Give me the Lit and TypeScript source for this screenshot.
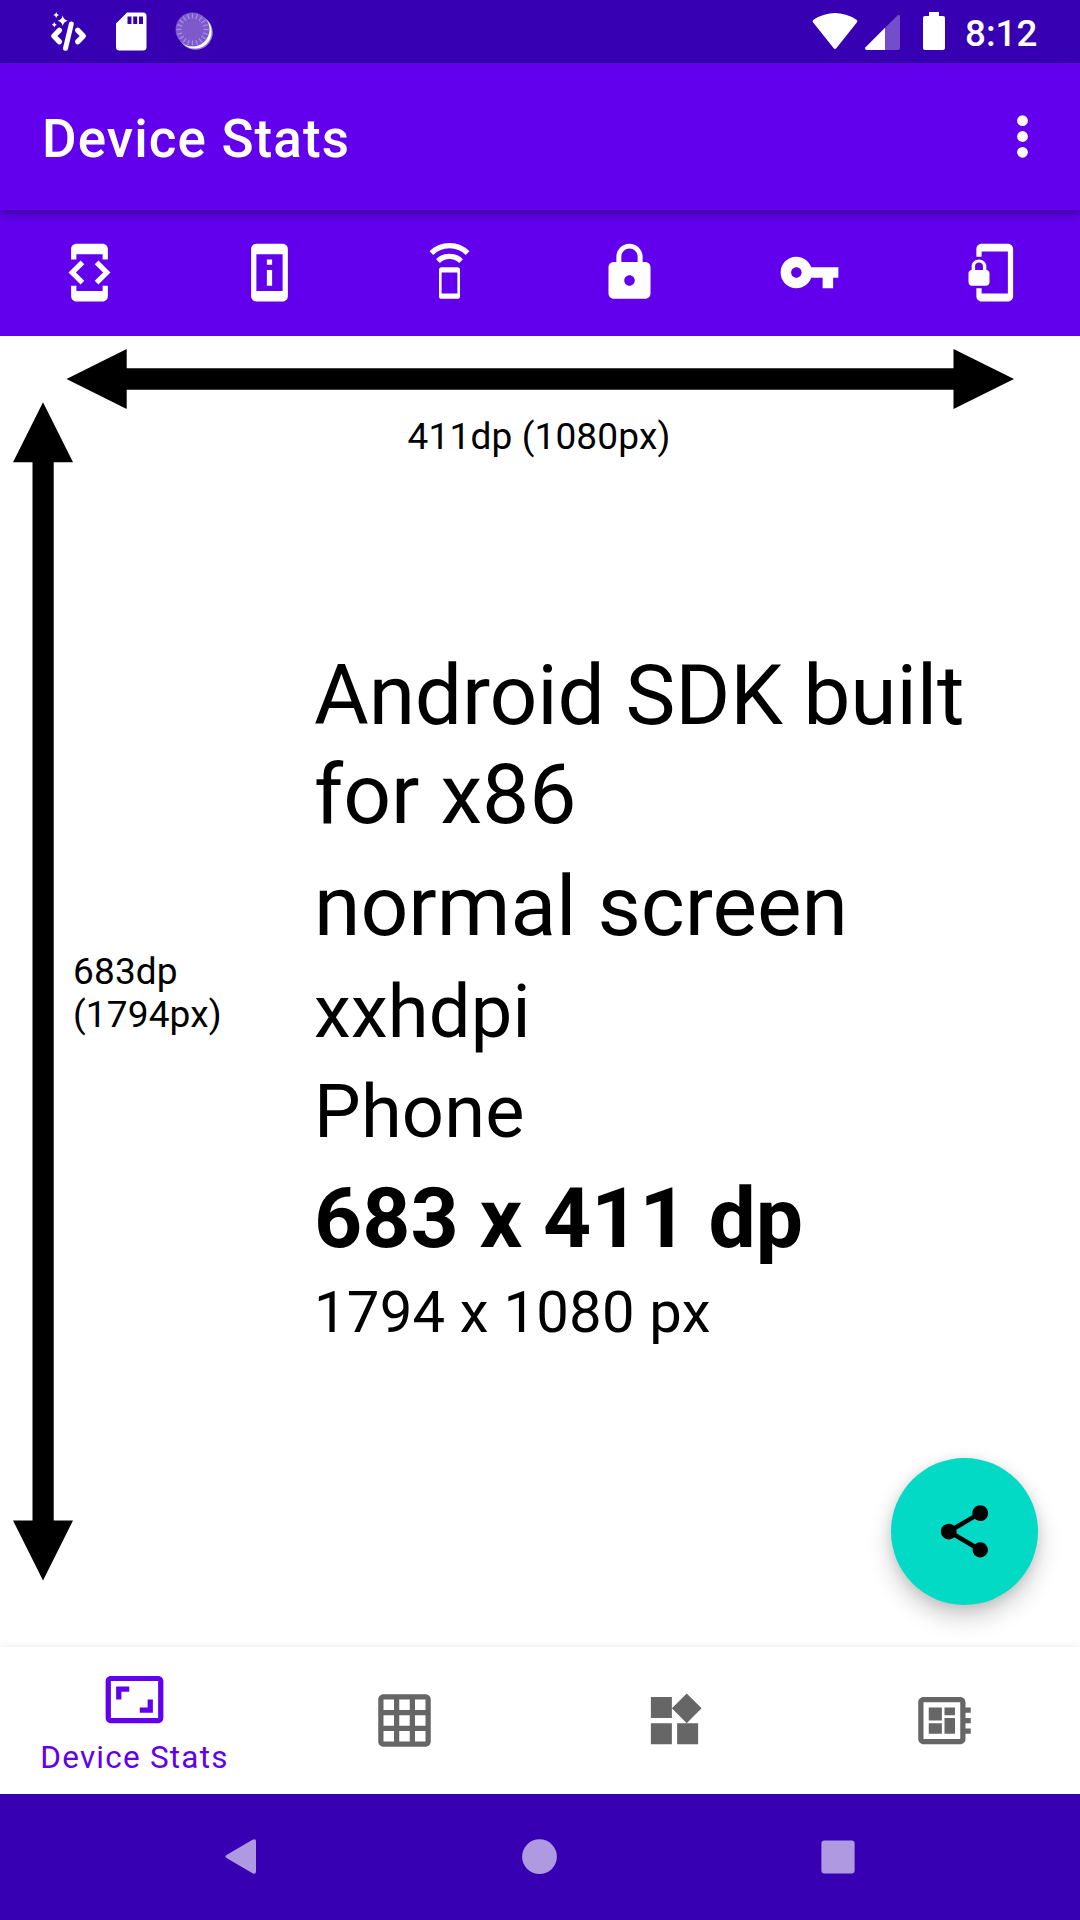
import { LitElement, html, css, svg } from "lit";
import { customElement } from "lit/decorators.js";

const TABS = [
  svg`<path d="M7 5h10v2h2V3c0-1.1-.9-1.99-2-1.99L7 1c-1.1 0-2 .9-2 2v4h2V5zm8.41 11.59L20 12l-4.59-4.59L14 8.83 17.17 12 14 15.17l1.41 1.42zM10 15.17L6.83 12 10 8.83 8.59 7.41 4 12l4.59 4.59L10 15.17zM17 19H7v-2H5v4c0 1.1.9 2 2 2h10c1.1 0 2-.9 2-2v-4h-2v2z"/>`,
  svg`<path d="M13 7h-2v2h2V7zm0 4h-2v6h2v-6zm4-9.99L7 1c-1.1 0-2 .9-2 2v18c0 1.1.9 2 2 2h10c1.1 0 2-.9 2-2V3c0-1.1-.9-1.99-2-1.99zM17 19H7V5h10v14z"/>`,
  svg`<path fill-rule="evenodd" d="M9 10h6q1 0 1 1v10q0 1-1 1H9q-1 0-1-1V11q0-1 1-1zM9 12v8h6v-8z"/><g fill="none" stroke="#fff" stroke-width="2"><path d="M5.1 4.65a9.8 9.8 0 0 1 13.8 0"/><path d="M7.6 7.65a6.2 6.2 0 0 1 8.8 0"/></g>`,
  svg`<path d="M18 8h-1V6c0-2.76-2.24-5-5-5S7 3.24 7 6v2H6c-1.1 0-2 .9-2 2v10c0 1.1.9 2 2 2h12c1.1 0 2-.9 2-2V10c0-1.1-.9-2-2-2zm-6 9c-1.1 0-2-.9-2-2s.9-2 2-2 2 .9 2 2-.9 2-2 2zm3.1-9H8.9V6c0-1.71 1.39-3.1 3.1-3.1 1.71 0 3.1 1.39 3.1 3.1v2z"/>`,
  svg`<path d="M12.65 10C11.83 7.67 9.61 6 7 6c-3.31 0-6 2.69-6 6s2.69 6 6 6c2.61 0 4.83-1.67 5.65-4H17v4h4v-4h2v-4H12.65zM7 14c-1.1 0-2-.9-2-2s.9-2 2-2 2 .9 2 2-.9 2-2 2z"/>`,
  svg`<path d="M19 1H9c-1.1 0-2 .9-2 2v3h2V4h10v16H9v-2H7v3c0 1.1.9 2 2 2h10c1.1 0 2-.9 2-2V3c0-1.1-.9-2-2-2zm-8.2 10V9.5C10.8 8.1 9.4 7 8 7S5.2 8.1 5.2 9.5V11c-.6 0-1.2.6-1.2 1.2v3.5c0 .7.6 1.3 1.2 1.3h5.5c.7 0 1.3-.6 1.3-1.2v-3.5c0-.7-.6-1.3-1.2-1.3zm-1.3 0h-3V9.5c0-.8.7-1.3 1.5-1.3s1.5.5 1.5 1.3V11z"/>`,
];

const PAGES = [
  svg`<path d="M20 2H4c-1.1 0-2 .9-2 2v16c0 1.1.9 2 2 2h16c1.1 0 2-.9 2-2V4c0-1.1-.9-2-2-2zM8 20H4v-4h4v4zm0-6H4v-4h4v4zm0-6H4V4h4v4zm6 12h-4v-4h4v4zm0-6h-4v-4h4v4zm0-6h-4V4h4v4zm6 12h-4v-4h4v4zm0-6h-4v-4h4v4zm0-6h-4V4h4v4z"/>`,
  svg`<path d="M13 13v8h8v-8h-8zM3 21h8v-8H3v8zM3 3v8h8V3H3zm13.66-1.31L11 7.34 16.66 13l5.66-5.66-5.66-5.65z"/>`,
  svg`<path d="M22 9V7h-2V5c0-1.1-.9-2-2-2H4c-1.1 0-2 .9-2 2v14c0 1.1.9 2 2 2h14c1.1 0 2-.9 2-2v-2h2v-2h-2v-2h2v-2h-2V9h2zm-4 10H4V5h14v14zM6 13h5v4H6zm6-6h4v3h-4zM6 7h5v5H6zm6 4h4v6h-4z"/>`,
];

const TICKS = Array.from({ length: 20 }, (_, i) => i * 18);

const icon = (shape: unknown) =>
  html`<svg class="icon" viewBox="0 0 24 24" fill="currentColor">${shape}</svg>`;

@customElement("app-root")
export class AppRoot extends LitElement {
  static styles = css`
    :host {
      display: flex;
      flex-direction: column;
      position: relative;
      width: 1080px;
      height: 1920px;
      overflow: hidden;
      background: #fff;
      color: #000;
      font-family: Roboto, sans-serif;
    }
    svg { display: block; flex: none; }
    .icon { width: 63px; height: 63px; }
    .status {
      flex: none;
      display: flex;
      align-items: flex-start;
      justify-content: space-between;
      height: 63px;
      background: #3700b3;
      color: #fff;
    }
    .status-right { display: flex; }
    .clock {
      width: 115px;
      padding-top: 12px;
      font-size: 36.75px;
      line-height: 43px;
      font-weight: 500;
    }
    .appbar {
      flex: none;
      display: flex;
      align-items: center;
      justify-content: space-between;
      height: 147px;
      padding-left: 42px;
      background: #6200ee;
      color: #fff;
      position: relative;
      z-index: 1;
      box-shadow: 0 4px 10px rgba(0, 0, 0, 0.3), 0 1px 4px rgba(0, 0, 0, 0.12);
    }
    .title {
      padding-top: 5px;
      font-size: 53px;
      line-height: 62px;
      font-weight: 500;
      letter-spacing: 1.1px;
    }
    .tabs {
      flex: none;
      display: grid;
      grid-template-columns: repeat(6, 180px);
      place-items: center;
      height: 126px;
      box-sizing: border-box;
      padding: 0 1px 1px 0;
      background: #6200ee;
      color: #fff;
    }
    .tabs .icon { margin-right: 1px; }
    .content {
      flex: 1;
      display: grid;
      grid-template-columns: 66px 1fr;
      grid-template-rows: 66px 1fr;
      min-height: 0;
    }
    .across { grid-column: 2; grid-row: 1; margin-top: 13px; }
    .down { grid-column: 1; grid-row: 2; margin-left: 13px; }
    .panel {
      grid-column: 2;
      grid-row: 2;
      display: flex;
      flex-direction: column;
      padding-top: 13px;
    }
    .small { font-size: 37px; line-height: 43px; letter-spacing: 0.15px; }
    .width { text-align: center; margin-right: 68px; }
    .body { display: flex; padding-top: 188px; }
    .height { width: 242px; padding: 304px 0 0 7px; box-sizing: border-box; }
    .facts { display: flex; flex-direction: column; width: 700px; margin-left: 6px; }
    .large { font-size: 84px; line-height: 99px; margin-bottom: 13px; }
    .model::first-line { letter-spacing: -0.16px; }
    .medium { font-size: 74px; line-height: 86px; margin-bottom: 14px; letter-spacing: 0.2px; }
    .strong { font-weight: 700; margin-bottom: 10px; }
    .pixels { font-size: 58px; line-height: 68px; letter-spacing: 0.22px; }
    .fab {
      position: absolute;
      right: 42px;
      bottom: 315px;
      display: grid;
      place-items: center;
      width: 147px;
      height: 147px;
      border-radius: 50%;
      background: #03dac6;
      box-shadow: 0 12px 24px rgba(0, 0, 0, 0.2), 0 2px 12px rgba(0, 0, 0, 0.1);
    }
    .pages {
      flex: none;
      display: grid;
      grid-template-columns: repeat(4, 1fr);
      height: 147px;
      background: #fff;
      color: #666;
      box-shadow: 0 0 8px rgba(0, 0, 0, 0.1);
    }
    .page {
      display: flex;
      flex-direction: column;
      align-items: center;
      justify-content: center;
      padding-right: 1px;
    }
    .active { color: #6200ee; justify-content: flex-start; padding-top: 21px; }
    .label { font-size: 31.5px; line-height: 37px; margin-top: 8px; letter-spacing: 1.22px; }
    .system {
      flex: none;
      display: flex;
      height: 126px;
      background: #3700b3;
    }
  `;

  render() {
    return html`
      <header class="status">
        <svg width="230" height="63" fill="#fff">
          <g fill="none" stroke="#fff" stroke-width="5.4" stroke-linecap="round" stroke-linejoin="round">
            <path d="M59.3 30.3 53.8 36l5.5 5.7"/>
            <path d="M77.8 30.3 83.3 36l-5.5 5.7"/>
            <path stroke-width="5" d="M71.3 24 65.5 48.3"/>
          </g>
          <path d="M62.7 15.5q1 4.2 5 5.3-4 1-5 5.2-1-4.2-5-5.2 4-1.1 5-5.3z"/>
          <path d="M56.2 12q.5 2.5 2.8 3-2.3.5-2.8 3-.5-2.5-2.8-3 2.3-.5 2.8-3z"/>
          <path d="M54.3 22q.5 2.3 2.5 2.8-2 .5-2.5 2.8-.5-2.3-2.5-2.8 2-.5 2.5-2.8z"/>
          <path fill-rule="evenodd" d="M127 12.5h16q3.5 0 3.5 3.5v31q0 3.5-3.5 3.5h-23.5q-3.5 0-3.5-3.5V23.5zM127.5 16.5V24h4v-7.5zM133.2 16.5V24h4v-7.5zM139 16.5V24h4v-7.5z"/>
          <circle cx="195.5" cy="32.5" r="17.3" fill="#9b80d9"/>
          <circle cx="194.8" cy="31.8" r="16.8"/>
          <circle cx="192.5" cy="29.5" r="17" fill="#7e59cc"/>
          <g stroke="#a78ddd" stroke-width="1.3">
            ${TICKS.map((a) => svg`<path transform=${`rotate(${a} 192.5 29.5)`} d="M192.5 13.5v5"/>`)}
          </g>
        </svg>
        <div class="status-right">
          <svg width="165" height="63" viewBox="800 0 165 63" fill="#fff">
            <path d="M813 22.3Q811.8 20.8 813.5 19.7 835 6.5 856.5 19.7 858.2 20.8 857 22.3L836.5 48Q835 49.8 833.5 48z"/>
            <path opacity=".3" d="M885 27.8 897.5 15.5Q900 13.5 900 17V47.5Q900 50 897.5 50H885z"/>
            <path d="M885 27.8V50H866.5Q864.2 49.5 865.5 47.3z"/>
            <path d="M929 12h10v4h4q2 0 2 2v30q0 2-2 2h-18q-2 0-2-2V18q0-2 2-2h4z"/>
          </svg>
          <div class="clock">8:12</div>
        </div>
      </header>
      <div class="appbar">
        <div class="title">Device Stats</div>
        <svg width="115" height="147" fill="#fff">
          <circle cx="57.5" cy="57.7" r="5.4"/>
          <circle cx="57.5" cy="73.5" r="5.4"/>
          <circle cx="57.5" cy="89.3" r="5.4"/>
        </svg>
      </div>
      <nav class="tabs">${TABS.map(icon)}</nav>
      <main class="content">
        <svg class="across" width="948" height="60">
          <path d="M.5 30 60.7 0V19.3H887.5V0L948 30 887.5 60V40.7H60.7V60z"/>
        </svg>
        <svg class="down" width="60" height="1179">
          <path d="M30 .3 60 60.3H40.7V1118.5H60L30 1178.5 0 1118.5H19.5V60.3H0z"/>
        </svg>
        <section class="panel">
          <div class="small width">411dp (1080px)</div>
          <div class="body">
            <div class="small height">683dp<br />(1794px)</div>
            <div class="facts">
              <div class="large model">Android SDK built<br />for x86</div>
              <div class="large">normal screen</div>
              <div class="medium">xxhdpi</div>
              <div class="medium">Phone</div>
              <div class="large strong">683 x 411 dp</div>
              <div class="pixels">1794 x 1080 px</div>
            </div>
          </div>
        </section>
      </main>
      <nav class="pages">
        <div class="page active">
          ${icon(svg`<path d="M19 12h-2v3h-3v2h5v-5zM7 9h3V7H5v5h2V9zm14-6H3c-1.1 0-2 .9-2 2v14c0 1.1.9 2 2 2h18c1.1 0 2-.9 2-2V5c0-1.1-.9-2-2-2zm0 16.01H3V4.99h18v14.02z"/>`)}
          <div class="label">Device Stats</div>
        </div>
        ${PAGES.map((p) => html`<div class="page">${icon(p)}</div>`)}
      </nav>
      <footer class="system">
        <svg width="1080" height="126" fill="#af99e1">
          <path d="M226.5 61 252.5 45.7Q256 44 256 47.5V77.5Q256 81 252.5 79.3L226.5 64Q224.5 62.5 226.5 61z"/>
          <circle cx="539.5" cy="62.7" r="17.4"/>
          <rect x="821.4" y="46.4" width="33.2" height="33.2" rx="3"/>
        </svg>
      </footer>
      <div class="fab">
        ${icon(svg`<path d="M18 16.08c-.76 0-1.44.3-1.96.77L8.91 12.7c.05-.23.09-.46.09-.7s-.04-.47-.09-.7l7.05-4.11c.54.5 1.25.81 2.04.81 1.66 0 3-1.34 3-3s-1.34-3-3-3-3 1.34-3 3c0 .24.04.47.09.7L8.04 9.81C7.5 9.31 6.79 9 6 9c-1.66 0-3 1.34-3 3s1.34 3 3 3c.79 0 1.5-.31 2.04-.81l7.12 4.16c-.05.21-.08.43-.08.65 0 1.61 1.31 2.92 2.92 2.92 1.61 0 2.92-1.31 2.92-2.92s-1.31-2.92-2.92-2.92z"/>`)}
      </div>
    `;
  }
}
